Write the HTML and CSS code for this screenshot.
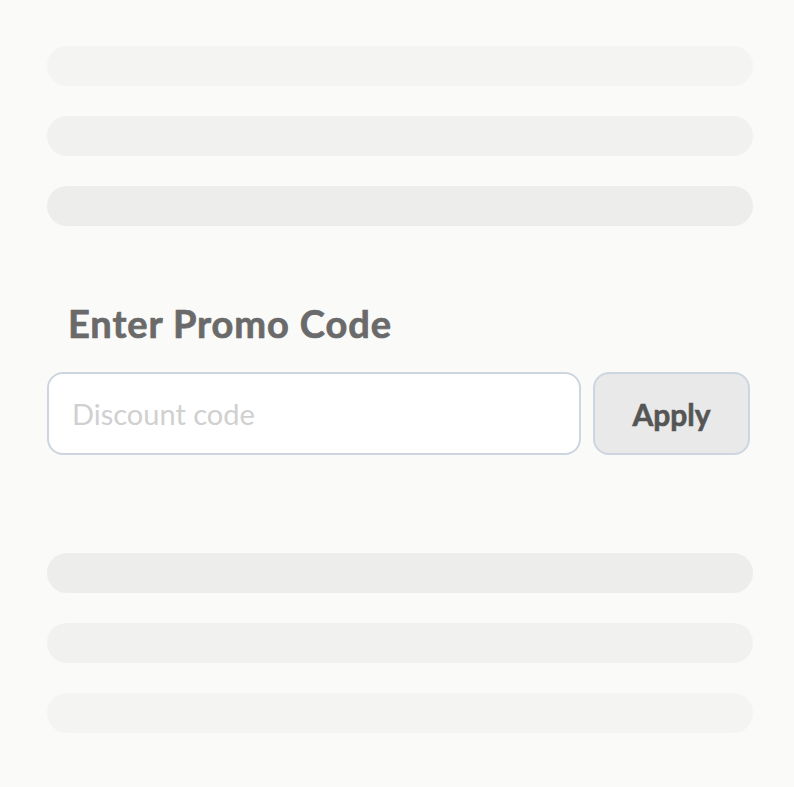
FILE: index.html
```html
<!DOCTYPE html>
<html lang="en">
<head>
    <meta charset="UTF-8">
    <meta name="viewport" content="width=device-width, initial-scale=1.0">
    <title>Promo Code</title>
    <link rel="stylesheet" href="styles.css">
</head>
<body>
    <div class="page">
        <div class="skeleton">
            <div class="bar bar-1"></div>
            <div class="bar bar-2"></div>
            <div class="bar bar-3"></div>
        </div>

        <div class="promo">
            <h2>Enter Promo Code</h2>
            <div class="promo-row">
                <input type="text" class="promo-input" placeholder="Discount code">
                <button class="promo-btn">Apply</button>
            </div>
        </div>

        <div class="skeleton">
            <div class="bar bar-3"></div>
            <div class="bar bar-2"></div>
            <div class="bar bar-1"></div>
        </div>
    </div>
</body>
</html>
```

FILE: styles.css
```css
body {
    margin: 0;
    background: #fafaf9;
    font-family: Lato, "Open Sans", sans-serif;
}
.page {
    width: 706px;
    padding: 46px 0 0 47px;
}
.skeleton {
    display: flex;
    flex-direction: column;
    gap: 30px;
}
.bar {
    height: 40px;
    border-radius: 20px;
}
.bar-1 {
    background: #f4f4f3;
}
.bar-2 {
    background: #f1f1f0;
}
.bar-3 {
    background: #ededec;
}
.promo {
    padding: 70px 0 98px;
}
.promo h2 {
    margin: 0 0 22px 21px;
    font-size: 38px;
    font-weight: 700;
    color: #6a6a6a;
    line-height: 54px;
    letter-spacing: 0.9px;
    -webkit-text-stroke: 0.7px #6a6a6a;
}
.promo-row {
    display: flex;
    gap: 12px;
}
.promo-input {
    width: 534px;
    height: 83px;
    box-sizing: border-box;
    border: 2.5px solid #cdd5e0;
    border-radius: 16px;
    background: #fff;
    padding: 0 23px;
    font-family: Lato, sans-serif;
    font-size: 29px;
    color: #333;
    outline: none;
}
.promo-input::placeholder {
    color: #d0d0d0;
}
.promo-btn {
    width: 157px;
    height: 83px;
    box-sizing: border-box;
    border: 2.5px solid #cdd5e0;
    border-radius: 16px;
    background: #e9e9e9;
    font-family: Lato, sans-serif;
    font-size: 30px;
    font-weight: 700;
    color: #555;
    -webkit-text-stroke: 0.6px #555;
    cursor: pointer;
}
```
